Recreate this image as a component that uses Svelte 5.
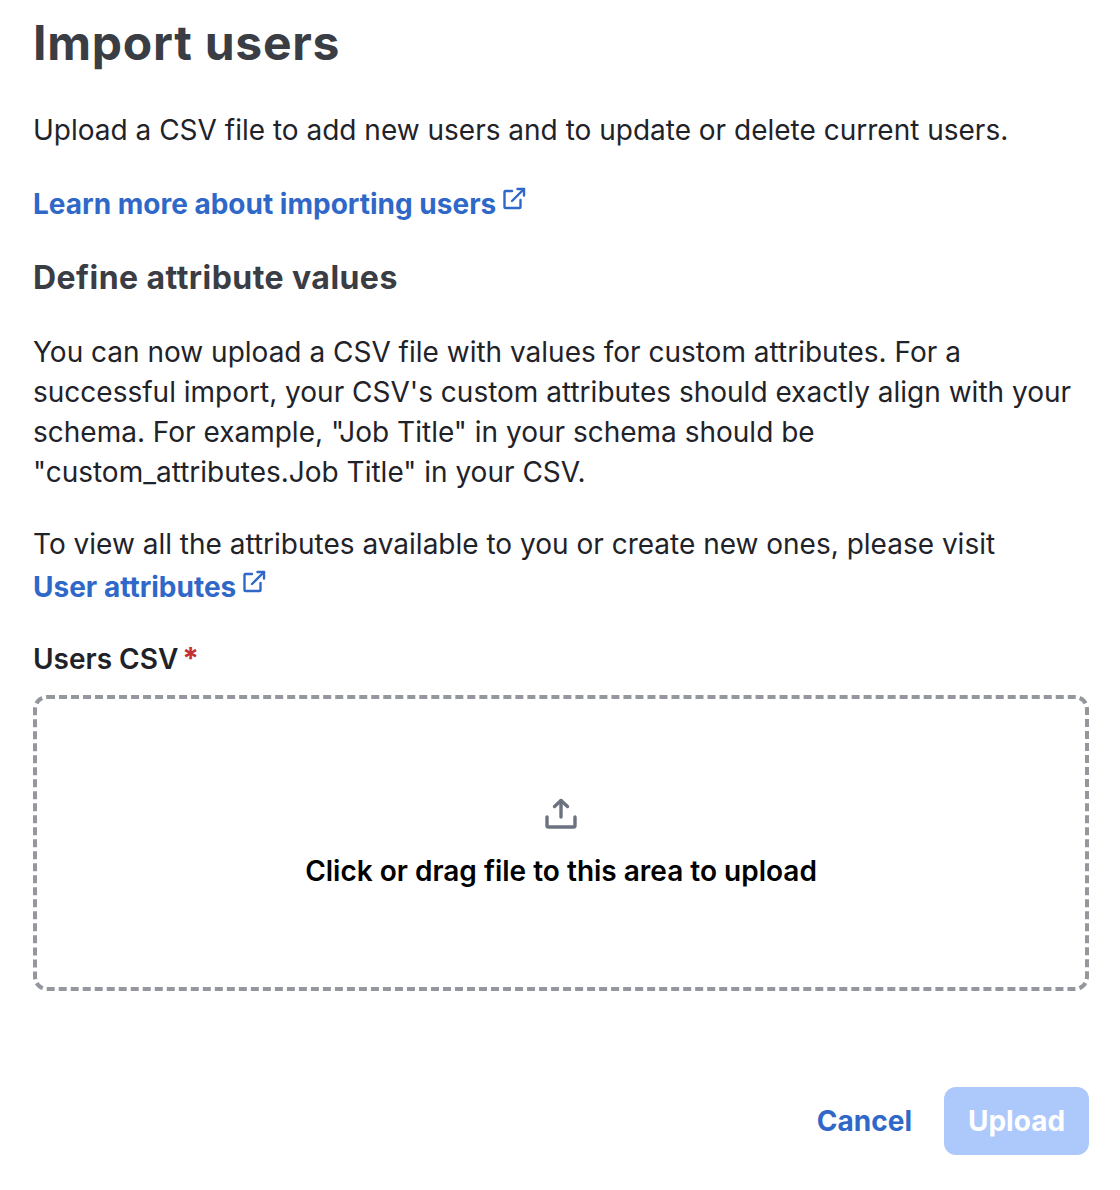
<script lang="ts">
  const attributeText = `You can now upload a CSV file with values for custom attributes. For a successful import, your CSV's custom attributes should exactly align with your schema. For example, "Job Title" in your schema should be "custom_attributes.Job Title" in your CSV.`;
</script>

{#snippet external()}
  <svg class="ext" viewBox="0 0 24 24" fill="none" stroke="currentColor" stroke-width="2.4" stroke-linecap="round" stroke-linejoin="round">
    <path d="M10 4H3.5a1 1 0 0 0-1 1v15a1 1 0 0 0 1 1h14a1 1 0 0 0 1-1v-7" />
    <path d="M10 14 22 2" />
    <path d="M15.5 2H22v6.5" />
  </svg>
{/snippet}

<main class="modal">
  <h1>Import users</h1>
  <p class="intro">Upload a CSV file to add new users and to update or delete current users.</p>
  <a class="link learn" href="#learn">Learn more about importing users{@render external()}</a>

  <h2>Define attribute values</h2>
  <p class="attrs">{attributeText}</p>
  <p class="visit">To view all the attributes available to you or create new ones, please visit</p>
  <a class="link attrs-link" href="#attrs">User attributes{@render external()}</a>

  <div class="label">Users CSV<span class="req">*</span></div>
  <div class="drop">
    <svg class="upload-icon" viewBox="0 0 32 32" fill="none" stroke="#6b7280" stroke-width="3.4" stroke-linecap="round" stroke-linejoin="round">
      <path d="M16 19V2.5" />
      <path d="M9.5 8.5 16 2.5l6.5 6" />
      <path d="M2 19v8.5q0 1.5 1.5 1.5h25q1.5 0 1.5-1.5V19" />
    </svg>
    <div class="drop-text">Click or drag file to this area to upload</div>
  </div>

  <footer>
    <button class="cancel">Cancel</button>
    <button class="upload" disabled>Upload</button>
  </footer>
</main>

<style>
  :global(body) { background: #fff; }
  .modal {
    width: 1120px;
    height: 1190px;
    box-sizing: border-box;
    padding: 13px 31px 0 33px;
    font-family: Inter, "Liberation Sans", sans-serif;
    font-size: 28px;
    line-height: 40px;
    color: #1f2329;
  }
  h1 {
    margin: 0;
    font-size: 48px;
    line-height: 60px;
    font-weight: 700;
    letter-spacing: 0.75px;
    color: #3a3d44;
  }
  h2 {
    margin: 32px 0 0;
    font-size: 32px;
    line-height: 44px;
    font-weight: 700;
    letter-spacing: 0.45px;
    color: #3a3d44;
  }
  p { margin: 0; }
  .intro { margin-top: 37px; }
  .attrs { margin-top: 32px; }
  .visit { margin-top: 32px; }
  .link {
    display: block;
    color: #2f68c8;
    font-weight: 700;
    text-decoration: none;
    line-height: 40px;
  }
  .learn { margin-top: 34px; }
  .attrs-link { margin-top: 3px; }
  .ext {
    width: 24px;
    height: 24px;
    margin-left: 6px;
    vertical-align: 3px;
  }
  .label {
    margin-top: 32px;
    font-weight: 600;
    line-height: 40px;
  }
  .req {
    margin-left: 4px;
    font-size: 30px;
    line-height: 0;
    font-weight: 700;
    color: #c2302f;
  }
  .drop {
    margin-top: 16px;
    height: 296px;
    padding-top: 3px;
    box-sizing: border-box;
    border: 4px dashed #94979d;
    border-radius: 14px;
    display: flex;
    flex-direction: column;
    align-items: center;
    justify-content: center;
  }
  .upload-icon { width: 32px; height: 32px; margin-bottom: 21px; }
  .drop-text { color: #000; font-weight: 600; }
  footer {
    margin-top: 96px;
    display: flex;
    justify-content: flex-end;
    align-items: center;
    gap: 32px;
  }
  button {
    font: inherit;
    font-weight: 700;
    border: 0;
    padding: 0;
  }
  .cancel { background: none; color: #2f68c8; }
  .upload {
    width: 145px;
    height: 68px;
    border-radius: 12px;
    background: #adc8fb;
    color: #fff;
  }
</style>
